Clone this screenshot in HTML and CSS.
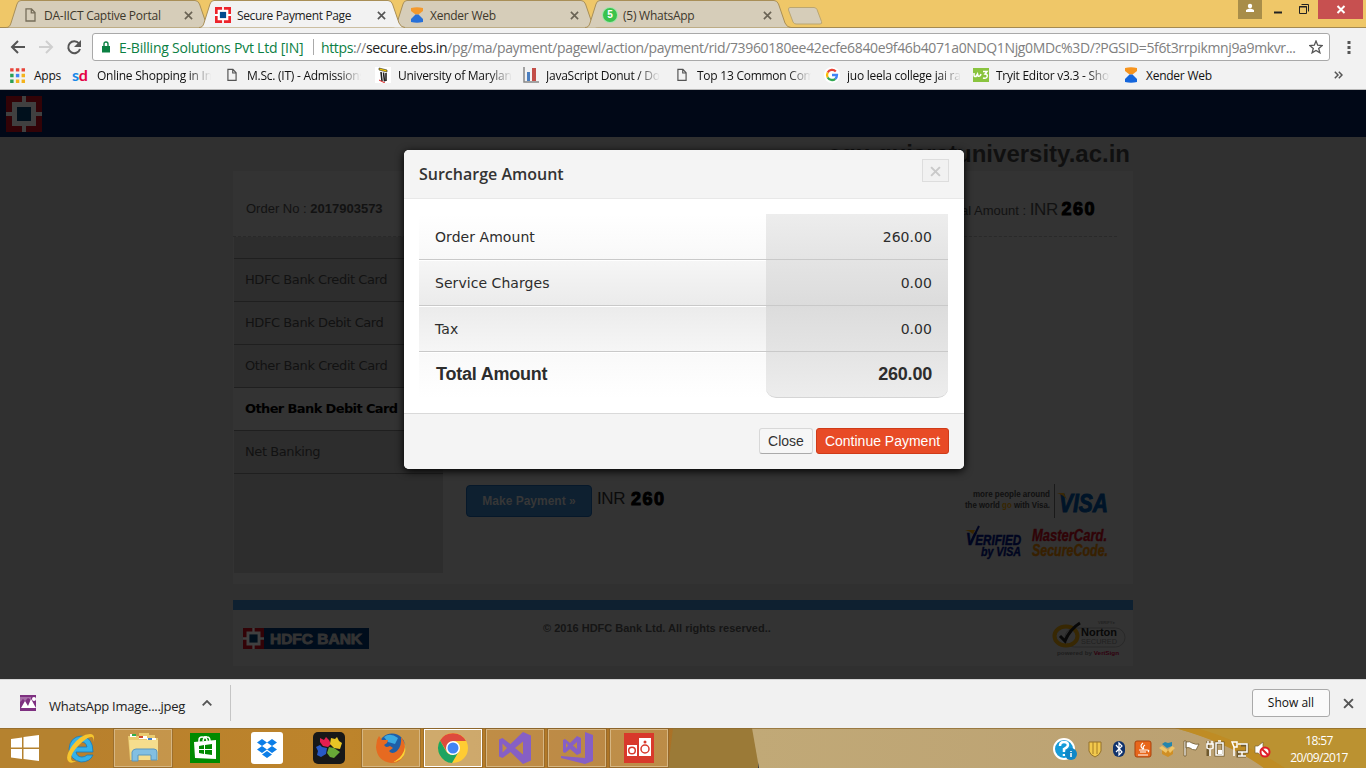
FILE: index.html
```html
<!DOCTYPE html>
<html lang="en">
<head>
<meta charset="utf-8">
<title>Secure Payment Page</title>
<link rel="stylesheet" href="styles.css">
</head>
<body>
<svg class="defs" width="0" height="0">
  <symbol id="hdfc" viewBox="0 0 36 36"><path class="h-red" d="M0 0h36v36H0z"/><path class="h-white" d="M6 6h24v24H6zM16 0h4v36h-4zM0 16h36v4H0z"/><path class="h-blue" d="M11 11h14v14H11z"/></symbol>
  <symbol id="doc" viewBox="0 0 11 14"><path d="M1 .8h5.500L10 4.500V13H1zM6.300 1v3.800H10" fill="none" stroke="currentColor" stroke-width="1.300"/></symbol>
  <symbol id="xender" viewBox="0 0 16 16"><path d="M2 1q6-1.500 12 0v3L9.500 7.500h-3L2 4z" fill="#f7941d"/><path d="M6.500 7.500h3L14 12v3q-6 1.500-12 0v-3z" fill="#1566dc"/></symbol>
  <symbol id="x" viewBox="0 0 10 10"><path d="M1 1l8 8M9 1L1 9" fill="none" stroke="currentColor" stroke-width="1.800"/></symbol>
  <symbol id="tabshape" viewBox="0 0 206 28"><path d="M0 27.500C3 27.500 4 26 5 23L11 4Q12 .5 15 .5H189Q192 .5 193.500 4L200 23Q202 27.500 206 27.500"/></symbol>
  <symbol id="vs" viewBox="0 0 32 32"><path fill-rule="evenodd" d="M24 0l8 3.500v25L24 32 11.500 20 3.500 26 0 24.500v-17L3.500 6l8 6zM24 9.500L16 16l8 6.500zM3.500 11.500v9L8 16z" fill="#865fc5"/></symbol>
</svg>

<header class="browser">
  <div class="tabstrip">
    <div class="tab"><svg class="shape"><use href="#tabshape"/></svg><svg class="fav doc"><use href="#doc"/></svg><span class="tab-title t1">DA-IICT Captive Portal</span><svg class="tab-x"><use href="#x"/></svg></div>
    <div class="tab active"><svg class="shape"><use href="#tabshape"/></svg><svg class="fav bright"><use href="#hdfc"/></svg><span class="tab-title t2">Secure Payment Page</span><svg class="tab-x"><use href="#x"/></svg></div>
    <div class="tab"><svg class="shape"><use href="#tabshape"/></svg><svg class="fav pale"><use href="#xender"/></svg><span class="tab-title">Xender Web</span><svg class="tab-x"><use href="#x"/></svg></div>
    <div class="tab"><svg class="shape"><use href="#tabshape"/></svg><span class="fav wa">5</span><span class="tab-title">(5) WhatsApp</span><svg class="tab-x"><use href="#x"/></svg></div>
    <svg class="newtab" viewBox="0 0 36 18"><path d="M3 .5h24q2 0 3 2l4.500 12q1 2.500-1.500 2.500H9q-2 0-3-2L1.500 3Q1 .5 3 .5z" fill="#d6cdb9" stroke="#bba671"/></svg>
    <div class="win">
      <span class="user"><svg width="24" height="19"><circle cx="12" cy="6" r="2.200" fill="#fff"/><path d="M8 12V10q4-3 8 0v2z" fill="#fff"/></svg></span>
      <svg class="minmax" width="56" height="19"><path d="M12 12.500h8" stroke="#222" stroke-width="2"/><path d="M37.500 6.500h7v7h-7zM37 7h8M39.500 4.500h7v7" fill="none" stroke="#222"/></svg>
      <span class="close"><svg width="45" height="19"><path d="M19.500 6l7 7M26.500 6l-7 7" stroke="#fff" stroke-width="2"/></svg></span>
    </div>
  </div>
  <div class="toolbar">
    <svg class="nav" width="92" height="34"><g fill="none" stroke-width="2"><path d="M25 19H12M18 13l-6 6 6 6" stroke="#555"/><path d="M39 19h13M46 13l6 6-6 6" stroke="#cfcfcf"/><path d="M79 15.500A6 6 0 1 0 80 21" stroke="#555"/></g><path d="M81 12v7h-7z" fill="#555"/></svg>
    <div class="omnibox">
      <svg class="lock" viewBox="0 0 8 12"><path d="M0 5h8v6.500H0z" fill="#0b8043"/><path d="M2 5V3q0-2 2-2t2 2v2" fill="none" stroke="#0b8043" stroke-width="1.400"/></svg>
      <span class="ev">E-Billing Solutions Pvt Ltd [IN]</span><span class="bar"></span>
      <span class="url"><span class="green">https</span>://<b>secure.ebs.in</b>/pg/ma/payment/pagewl/action/payment/rid/73960180ee42ecfe6840e9f46b4071a0NDQ1Njg0MDc%3D/?PGSID=5f6t3rrpikmnj9a9mkvr...</span>
      <svg class="star" viewBox="0 0 14 14"><path d="M7 1l1.700 4.200 4.500.3-3.500 2.900 1.200 4.400L7 10.400l-3.900 2.400 1.200-4.400L.8 5.500l4.500-.3z" fill="none" stroke="#555" stroke-width="1.300"/></svg>
    </div>
    <svg class="dots" width="4" height="14"><path d="M.5 0h3v3h-3zM.5 5h3v3h-3zM.5 10h3v3h-3z" fill="#555"/></svg>
  </div>
  <nav class="bookmarks">
    <div class="bm b0"><svg class="bi" viewBox="0 0 14 14"><g fill="#e8443a"><path d="M1 1h3v3H1zM6 1h3v3H6zM11 1h3v3h-3z"/></g><path d="M1 6h3v3H1zM1 11h3v3H1z" fill="#2b9f55"/><path d="M6 6h3v3H6z" fill="#4285f4"/><path d="M11 6h3v3h-3zM6 11h3v3H6zM11 11h3v3h-3z" fill="#f4b31c"/></svg><span>Apps</span></div>
    <div class="bm b1"><span class="sd">s<i>d</i></span><span class="fade">Online Shopping in India</span></div>
    <div class="bm b2"><svg class="bi doc"><use href="#doc"/></svg><span class="fade">M.Sc. (IT) - Admissions</span></div>
    <div class="bm b3"><svg class="bi" viewBox="0 0 16 16"><path d="M0 0h16v16H0z" fill="#fff"/><path d="M4 1l8 2v2L4 3z" fill="#ffd200" stroke="#222" stroke-width=".6"/><path d="M6 5l1 9M8.500 5.500l1 9M11 6v8" stroke="#222" stroke-width="1.600"/><path d="M4 13l6 3" stroke="#d22"/></svg><span class="fade">University of Maryland</span></div>
    <div class="bm b4"><svg class="bi" viewBox="0 0 16 16"><path d="M1 0v15h15" fill="none" stroke="#888" stroke-width="1.500"/><path d="M4 5h3v9H4z" fill="#4c7fc0"/><path d="M9 1h4v13H9z" fill="#c34e48"/></svg><span class="fade">JavaScript Donut / Doughnut</span></div>
    <div class="bm b5"><svg class="bi doc"><use href="#doc"/></svg><span class="fade">Top 13 Common Computer</span></div>
    <div class="bm b6"><svg class="bi" viewBox="0 0 16 16"><circle cx="8" cy="8" r="8" fill="#fff"/><g fill="none" stroke-width="2.300"><path d="M11.800 4.500A5 5 0 0 0 3.700 5.500" stroke="#ea4335"/><path d="M3.700 5.500a5 5 0 0 0 0 5" stroke="#fbbc05"/><path d="M3.700 10.500a5 5 0 0 0 7.600 1.300" stroke="#34a853"/><path d="M11.300 11.800A5 5 0 0 0 13 8H8" stroke="#4285f4"/></g></svg><span class="fade">juo leela college jai ram</span></div>
    <div class="bm b7"><svg class="bi" viewBox="0 0 16 16"><path d="M0 1h16v14H0z" fill="#8ac43f"/><path d="M1 6v2q0 2 2 1.500L4.500 7 5 9q2 1 3-2M10 4.500h4L12 7q3 0 2 3-1 2-4 1" fill="none" stroke="#fff" stroke-width="1.500"/></svg><span class="fade">Tryit Editor v3.3 - Show</span></div>
    <div class="bm b8"><svg class="bi"><use href="#xender"/></svg><span>Xender Web</span></div>
    <svg class="more" width="9" height="8"><path d="M.8.8L4 4 .8 7.200M4.800.8L8 4 4.800 7.200" fill="none" stroke="#555" stroke-width="1.500"/></svg>
  </nav>
</header>

<main class="page">
  <div class="site-head"><svg class="site-logo"><use href="#hdfc"/></svg></div>
  <div class="site-name">egu.gujaratuniversity.ac.in</div>
  <section class="box">
    <div class="order"><span class="order-no">Order No : <b>2017903573</b></span><span class="order-total">Total Amount : <span class="inr">INR</span> <b>260</b></span></div>
    <div class="cols">
      <ul class="methods"><li>HDFC Bank Credit Card</li><li>HDFC Bank Debit Card</li><li>Other Bank Credit Card</li><li class="on">Other Bank Debit Card</li><li>Net Banking</li></ul>
      <div class="pay">
        <div class="pay-row"><span class="make">Make Payment »</span><span class="inr">INR</span><b>260</b></div>
        <svg class="cards" width="150" height="80">
          <g font-family="Liberation Sans" font-weight="bold">
            <text x="12" y="17" font-size="9" fill="#101010" textLength="77" lengthAdjust="spacingAndGlyphs">more people around</text>
            <text x="4" y="28" font-size="9" fill="#101010" textLength="85" lengthAdjust="spacingAndGlyphs">the world <tspan fill="#382600">go</tspan> with Visa.</text>
            <path d="M93.500 4v34" stroke="#1a1a1a"/>
            <g font-style="italic"><text x="98" y="32" font-size="26" fill="#001428" stroke="#001428" textLength="49" lengthAdjust="spacingAndGlyphs">VISA</text><path d="M96 13h7l3 7q-3-5-10-7z" fill="#3a2806"/>
            <text x="5" y="65" font-size="17" fill="#000520" stroke="#000520" stroke-width=".5" textLength="55" lengthAdjust="spacingAndGlyphs">V<tspan font-size="14">ERIFIED</tspan></text><path d="M4 50l10 0-2 4q-3-3-8-4z" fill="#382600"/><path d="M10 62l8-16" stroke="#000520" stroke-width="2"/>
            <text x="20" y="76" font-size="12" fill="#000520" stroke="#000520" stroke-width=".4" textLength="40" lengthAdjust="spacingAndGlyphs">by VISA</text>
            <text x="71" y="61" font-size="17" fill="#300307" stroke="#300307" stroke-width=".4" textLength="75" lengthAdjust="spacingAndGlyphs">MasterCard.</text>
            <text x="71" y="76" font-size="16" fill="#382000" stroke="#382000" stroke-width=".4" textLength="76" lengthAdjust="spacingAndGlyphs">SecureCode.</text></g>
          </g>
        </svg>
      </div>
    </div>
  </section>
  <footer class="foot">
    <div class="bank"><svg><use href="#hdfc"/></svg><svg width="105" height="21"><text x="6" y="15.500" font-family="Liberation Sans" font-weight="bold" font-size="14" fill="#333" stroke="#333" stroke-width=".9" textLength="92" lengthAdjust="spacingAndGlyphs">HDFC BANK</text></svg></div>
    <p>© 2016 HDFC Bank Ltd. All rights reserved..</p>
    <svg class="norton" width="76" height="40"><rect x="14" y="9" width="60" height="19" rx="9.500" fill="none" stroke="#292929"/><ellipse cx="15" cy="17" rx="11.500" ry="9.500" fill="none" stroke="#382803" stroke-width="4"/><path d="M9 17l5 5Q19 10 29 4" fill="none" stroke="#080808" stroke-width="3"/><g font-family="Liberation Sans" font-weight="bold"><text x="30" y="17" font-size="11" fill="#080808" textLength="36" lengthAdjust="spacingAndGlyphs">Norton</text><text x="30" y="25" font-size="7" fill="#202020" font-weight="normal" textLength="36" lengthAdjust="spacingAndGlyphs">SECURED</text><text x="47" y="5" font-size="4" fill="#222">VERIFY ▸</text><text x="6" y="36" font-size="5.500" fill="#1d1d1d" textLength="62" lengthAdjust="spacingAndGlyphs">powered by <tspan fill="#30000d">VeriSign</tspan></text></g></svg>
  </footer>

  <div class="modal">
    <div class="m-head"><h3>Surcharge Amount</h3><span class="m-x"><svg width="11" height="11"><use href="#x"/></svg></span></div>
    <div class="m-body">
      <div class="row r1"><span>Order Amount</span><span class="amt">260.00</span></div>
      <div class="row r2"><span>Service Charges</span><span class="amt">0.00</span></div>
      <div class="row r3"><span>Tax</span><span class="amt">0.00</span></div>
      <div class="row r4"><span>Total Amount</span><span class="amt">260.00</span></div>
    </div>
    <div class="m-foot"><span class="btn">Close</span><span class="btn go">Continue Payment</span></div>
  </div>
</main>

<div class="shelf">
  <svg class="file" viewBox="0 0 16 16"><path d="M0 0h16v16H0z" fill="#7e3080"/><path d="M0 2h11v3L8 3 5 6 3 4 0 7z" fill="#fff" opacity=".3"/><path d="M1 13l4-7 3 5 3-7 5 9z" fill="#fff"/><circle cx="14" cy="4" r="2" fill="#fff"/></svg>
  <span class="fname">WhatsApp Image....jpeg</span>
  <svg class="up" width="10" height="6"><path d="M.7 5.300L5 1l4.300 4.300" fill="none" stroke="#555" stroke-width="1.800"/></svg>
  <span class="sep"></span>
  <span class="showall">Show all</span>
  <svg class="shelf-x"><use href="#x"/></svg>
</div>

<div class="taskbar">
  <svg class="wall" width="1366" height="40"><defs><linearGradient id="g1"><stop offset="0" stop-color="#b77f2d"/><stop offset=".5" stop-color="#bd842b"/><stop offset="1" stop-color="#a97026"/></linearGradient><linearGradient id="g2"><stop offset="0" stop-color="#c1a977"/><stop offset="1" stop-color="#b99e70"/></linearGradient></defs><path d="M0 0h700v40H0z" fill="url(#g1)"/><path d="M0 0h74q-3 25-12 40H0z" fill="#b5822f"/><path d="M673 0h85v40h-90z" fill="#9b7a37"/><path d="M752 0h614v40H759z" fill="url(#g2)"/><path d="M1175 0h191v40h-102q-30-24-89-40z" fill="#bb9231"/><path d="M1175 0h22q48 14 88 40h-21q-35-25-89-40z" fill="#bf8c24"/><path d="M0 .5h1366" stroke="#8c682e" opacity=".7"/></svg>
  <div class="task start"><svg viewBox="0 0 28 26"><path d="M0 4l11-1.500V12.500H0zM12.500 2L28 0v12.500H12.500zM0 14h11v10L0 22.500zM12.500 14H28v12l-15.500-2z" fill="#fff"/></svg></div>
  <div class="task ie"><svg viewBox="0 0 32 32"><path fill-rule="evenodd" d="M28 20H11q1 5 6 5 3 0 5-2h6q-3 7-12 7Q5 28 4 17 5 5 16 4q12 1 12 16zM11 15h11q-1-5-5.500-5T11 15z" fill="#35b1e8" stroke="#1979b8" stroke-width=".8"/><path d="M28 10Q31 2 25 2 16 2 7 14-1 26 4 30q3 2 9-2-6 3-7-1 0-6 8-14Q23 4 27 5q2 1 1 5z" fill="#f6c52e"/></svg></div>
  <div class="task framed"><svg viewBox="0 0 32 32"><path d="M1 4h11v-3h10v2h6v3h3v22H3z" fill="#eacb70"/><path d="M3 2h6v3H3z" fill="#fff"/><path d="M5 2h4v2H5z" fill="#2eae4b"/><path d="M12 4h8v3h-8z" fill="#fff"/><path d="M12 4h4v2h-4z" fill="#d34b2a"/><path d="M20 6h9v3h-9z" fill="#fff"/><path d="M21 6h4v2h-4z" fill="#4080d0"/><path d="M2 8h29v20H4z" fill="#f5dd8d"/><path d="M5 29V20q1-3 4-3h18q3 0 3 3v8h-6v-5H11v6z" fill="#82bfe2" stroke="#5b97bd"/></svg></div>
  <div class="task store"><svg viewBox="0 0 32 32"><path d="M1 1h30v30H1z" fill="#008a00"/><path d="M5 10l22-2v19L6 26z" fill="#fff"/><path d="M10 10V8q0-3 3-3 5 0 5 4M14 9q1-5 4-4 3 0 3 4" fill="none" stroke="#fff" stroke-width="1.500"/><path d="M10 14l5-1v4h-5zM16 13l7-1v5h-7zM10 18h5v4l-5-1zM16 18h7v5l-7-1z" fill="#008a00"/></svg></div>
  <div class="task drop"><svg viewBox="0 0 32 32"><rect width="32" height="32" rx="3" fill="#fff"/><path d="M11 7l5 3.500-5 3.500-5-3.500zM21 7l5 3.500-5 3.500-5-3.500zM11 14l5 3.500-5 3.500-5-3.500zM21 14l5 3.500-5 3.500-5-3.500zM16 19l5 3.500-5 3.500-5-3.500z" fill="#0c7ee8"/></svg></div>
  <div class="task puzzle"><svg viewBox="0 0 32 32"><rect width="32" height="32" rx="5" fill="#181818"/><path d="M7 6l4 2 2-3 3 3 2 4-3 3-5-1-3-4z" fill="#e41e50"/><path d="M18 6l4 1 2-2 2 4 3 2-2 6-6-1-4-4z" fill="#e8c425"/><path d="M3 15l4-2 2 2 5 1-1 6-5 3-4-2 1-4z" fill="#2859c5"/><path d="M16 15l5 1 6 4-3 3-3 3-4-1-3-4z" fill="#69a937"/></svg></div>
  <div class="task framed ff"><svg viewBox="0 0 32 32"><circle cx="17" cy="15" r="13.500" fill="#1f5fa8"/><path d="M9 5q6-5 14 1l-3 6-7-2z" fill="#3aa9e0"/><path d="M2 8l2-4 3 4 6 0-1 3-3 2 2 2q2 0 4-1l3 2-4 3q3 4 8 0 5-5 4-14 5 6 4 12-1 14-14 14Q2 29 1 15z" fill="#e66a20"/><path d="M26 4q6 7 3 15-4 9-12 11 12-1 13.500-12Q31 9 26 4z" fill="#fbd336"/></svg></div>
  <div class="task framed cur"><svg viewBox="0 0 32 32"><circle cx="16" cy="16" r="15" fill="#fc3"/><path d="M3 8.500A15 15 0 0 1 29 9H16l-6.500 10z" fill="#de4b3d"/><path d="M3 8.500A15 15 0 0 0 15 31l7-12-6 4q-5 0-7-4z" fill="#1da462"/><circle cx="16" cy="16" r="7" fill="#fff"/><circle cx="16" cy="16" r="5.500" fill="#4285f4"/></svg></div>
  <div class="task framed vs"><svg><use href="#vs"/></svg></div>
  <div class="task framed vs"><svg viewBox="0 0 32 32"><path d="M24 0l8 3v26l-8 3L0 26v-2l24 2z" fill="#865fc5"/><path fill-rule="evenodd" d="M16 4l4 2v15l-4 2-7-6-5 4-2-1V8l2-1 5 4zM16 10l-4 3.500 4 3.500zM5 11v5l2-2.500z" fill="#865fc5"/></svg></div>
  <div class="task framed red"><svg viewBox="0 0 32 32"><path d="M1 1h30v30H1z" fill="#d8392b"/><path d="M4 13h10v11H4zM16 6h12v18H16z" fill="#fff"/><g fill="none" stroke="#d8392b" stroke-width="1.500"><circle cx="9" cy="18.500" r="3.300"/><circle cx="22" cy="17" r="4"/></g><circle cx="22" cy="10" r="1.500" fill="#d8392b"/></svg></div>
  <svg class="tray" width="232" height="40">
    <circle cx="17" cy="21" r="10" fill="#159bd8" stroke="#fff" stroke-width="2"/><path d="M13 18q0-4 4-4t4 3q0 2-4 4v3M17 26v2" fill="none" stroke="#fff" stroke-width="2.500"/><circle cx="24" cy="26" r="6" fill="#0f87c7"/><path d="M24 23v1M24 25v4" stroke="#fff" stroke-width="1.500"/>
    <path d="M42 14h12v9q-1 4-6 6-5-2-6-6z" fill="#f2c94d" stroke="#93702c"/><path d="M46 14v12M50 14v12" stroke="#a67c25"/>
    <rect x="66" y="13" width="12" height="16" rx="6" fill="#0f326c"/><path d="M69 17l6 7-3 3V15l3 3-6 6" fill="none" stroke="#fff" stroke-width="1.200"/>
    <rect x="88" y="13" width="16" height="16" rx="2" fill="#e8661b" stroke="#a9430e"/><path d="M96 15q-4 3 0 6M98 17q-3 2-1 4M92 22h8q3 0 1 2M93 24h6M91 27h10" fill="none" stroke="#fff" stroke-width="1.200"/>
    <path d="M115 20l6 2 5-2v6l-5 3-6-3z" fill="#d08f25"/><path d="M112 20l3-2 6 4-2 3zM128 20l-3-2-4 4 2 3z" fill="#efc466"/><path d="M115 16l3-2 3 1 4-1v4l-5 2z" fill="#2385ad"/>
    <g transform="translate(1)"><path d="M136 13h2v15h-2zM138 14q4-1 6 1 4 2 7 1l-3 6q-4 0-6-2-2-1-4 0z" fill="#fff" stroke="#6e592e" stroke-width=".8"/></g>
    <g transform="translate(6)"><path d="M163 15h7v12h-7zM155 13v15M188 17h6v7h-9v4h8" fill="none" stroke="#6e592e" stroke-width="3"/>
    <g fill="none" stroke="#fff" stroke-width="1.500"><path d="M163 15h7v12h-7zM165 13h3M154 16h6v4q-3 2-6 0zM155 13v3M159 13v3M157 21v7"/><path d="M185 16h9v8h-9M189 24v4M185 28h8M179 14h5v5h-3zM181 19v9"/></g><path d="M165 22h4v4h-4z" fill="#fff"/>
    <path d="M202 18h3l5-4v15l-5-4h-3z" fill="#fff" stroke="#7a6435" stroke-width=".7"/><circle cx="212" cy="24" r="4.500" fill="#fff" stroke="#df1f26" stroke-width="2"/><path d="M209 21l6 6" stroke="#df1f26" stroke-width="2"/></g>
  </svg>
  <div class="clock"><span>18:57</span><span>20/09/2017</span></div>
</div>
</body>
</html>
```
FILE: styles.css
```css
*{box-sizing:border-box}
body{margin:0;width:1366px;height:768px;overflow:hidden;display:flex;flex-direction:column;font-family:"Liberation Sans",Arial,sans-serif;background:#303030}
.defs{position:absolute}
svg{display:block;flex:none}
.browser,.shelf,.taskbar{font-family:"Open Sans","Noto Sans",sans-serif;font-size:12px;letter-spacing:-.25px;white-space:nowrap;flex:none}
.browser{height:90px;background:#f2f2f2;border-bottom:1px solid #b9b9b9}
.h-red{fill:var(--red,#320307)}.h-white{fill:var(--white,#404040)}.h-blue{fill:var(--blue,#00101c)}
.bright{--red:#ed232a;--white:#fff;--blue:#004c8f}

.tabstrip{height:28px;background:#efc768;display:flex;padding-left:6px;box-shadow:inset 0 -1px #a58a50}
.tab{position:relative;width:206px;height:28px;margin-right:-13px;display:flex;align-items:center;padding:2px 19px 0 18px;flex:none;color:#3d382c}
.tab .shape{position:absolute;left:0;top:0;width:206px;height:28px;fill:#d6cdb9;stroke:#a98f57}
.tab .fav{position:relative;width:16px;height:16px;margin-right:5px;margin-left:-1px}
.tab .fav.doc{width:11px;height:14px;margin:0 8px 0 1px;color:#766d5a}
.tab.active{z-index:2;color:#222}
.tab.active .shape{fill:#f2f2f2}
.tab.active .fav{margin-right:6px;margin-left:-2px}
.tab-title{position:relative;flex:1}
.active .tab-title{letter-spacing:-.35px}
.tab-x{position:relative;width:9px;height:9px;color:#6a6354}
.active .tab-x{color:#555}
.pale{opacity:.9}
.wa{border-radius:50%;background:#3ac34c;color:#fff;font:bold 10px/14px "Liberation Sans",sans-serif;text-align:center;border:1px solid #fff8}
.newtab{width:36px;height:18px;margin:7px 0 0 9px}
.win{margin-left:auto;display:flex;height:19px;padding-right:3px}
.user{background:#a88d49}.close{background:#c75050}

.toolbar{height:34px;display:flex;align-items:center}
.omnibox{width:1238px;height:28px;margin-top:4px;background:#fff;border:1px solid #a9a9a9;border-radius:3px;display:flex;align-items:center;font-size:14px}
.lock{width:8px;height:12px;margin:0 9px 0 9px}
.ev{color:#0b8043;width:185px;letter-spacing:-.22px}
.bar{width:1px;height:16px;background:#aaa;margin:0 7px 0 9px}
.url{color:#808080;width:978px;letter-spacing:-.36px}
.url b{font-weight:400;color:#222}.green{color:#0b8043}
.star{width:14px;height:14px;margin-left:10px}
.dots{margin:5px 0 0 17px}

.bookmarks{height:26px;display:grid;grid-template-columns:63px 154px 149px 148px 153px 148px 150px 150px 130px 1fr;padding-left:9px;align-items:center;color:#111}
.bm{display:flex;align-items:center;min-width:0}
.bi{width:16px;height:16px;margin-right:7px}
.b0 .bi{margin-right:9px}
.b7 .bi,.b8 .bi{margin-left:-1px}
.bi.doc{width:10px;height:14px;margin:0 10px 0 1px;color:#555}
.fade{width:114px;overflow:hidden;-webkit-mask:linear-gradient(90deg,#000 80%,transparent);mask:linear-gradient(90deg,#000 80%,transparent)}
.sd{width:17px;margin-right:8px;font:bold 16px/16px "Lato",sans-serif;color:#1788e8}
.sd i{font-style:normal;color:#e40046}
.more{margin-left:80px}

.page{position:relative;height:589px;flex:none;overflow:hidden;background:#303030;color:#121212}
.site-head{height:47px;background:#010817;padding:6px}
.site-logo{width:36px;height:36px}
.site-name{height:34px;padding-right:236px;text-align:right;font:bold 24px/34px "Liberation Sans",Arial,sans-serif;color:#101010}
.box{width:900px;height:413px;margin-left:233px;background:#333}
.order{height:66px;width:884px;border-bottom:1px dashed #292929;display:flex;justify-content:space-between;padding:26px 21px 0 13px;font-size:13px;line-height:24px}
.order-total b{font:900 18px/24px "Liberation Sans",sans-serif;color:#000;-webkit-text-stroke:1px #000;letter-spacing:1.500px}
.inr{font-size:17px;letter-spacing:-.4px}
.cols{display:flex}
.methods{margin:0 0 0 1px;padding:21px 0 0;width:209px;height:336px;background:#2d2d2d;list-style:none;font:13px/42px "DejaVu Sans",sans-serif;color:#121212}
.methods li{height:43px;padding-left:11px;border-top:1px solid #1f1f1f;white-space:nowrap;letter-spacing:-.42px}
.methods li.on{background:#333;color:#000;font-weight:700;letter-spacing:-.62px}
.methods li:last-child{border-bottom:1px solid #1f1f1f;height:44px}
.pay{flex:1;display:flex;justify-content:space-between;padding:248px 22px 0 23px;align-items:flex-start}
.pay-row{display:flex;align-items:center;color:#0b0b0b}
.make{width:126px;height:32px;background:#0e2030;border:1px solid #06182a;border-radius:4px;color:#373737;font:bold 12px/30px "Liberation Sans";text-align:center}
.pay-row .inr{margin:-4px 6px 0 5px}
.pay-row b{font-size:18px;margin-top:-4px;color:#000;-webkit-text-stroke:1px #000;letter-spacing:1.500px}
.cards{margin-top:-5px}
.foot{width:900px;height:66px;margin:16px 0 0 233px;border-top:10px solid #0e2030;background:#333;display:flex}
.bank{display:flex;height:21px;background:#000d1c;margin:18px 0 0 10px;width:126px}
.bank svg:first-child{width:21px;height:21px}
.foot p{margin:11px 0 0 174px;width:508px;font:bold 11px/14px "Liberation Sans";color:#151515;white-space:nowrap;letter-spacing:0}
.norton{margin-top:9px}

.modal{position:absolute;left:404px;top:60px;width:560px;height:319px;background:#fff;border-radius:5px;overflow:hidden;box-shadow:0 2px 8px #000;color:#2d2d2d}
.m-head{height:49px;background:#f4f4f4;border-bottom:1px solid #e8e8e8;display:flex;justify-content:space-between;padding:9px 15px 0}
.m-head h3{margin:0;font:600 16px/30px "Open Sans",sans-serif;color:#333}
.m-x{width:27px;height:23px;border:1px solid #ddd;background:#f1f1f1;display:grid;place-items:center;color:#c9c9c9;padding-top:2px}
.m-body{height:214px;padding:15px 16px 0 15px}
.row{height:46px;display:flex;justify-content:space-between;border-bottom:1px solid #c9c9c9;padding-left:16px;font:14px/47px "DejaVu Sans",sans-serif;letter-spacing:.05px;background:linear-gradient(#fff,#f8f8f8)}
.amt{width:182px;height:45px;text-align:right;padding-right:16px;background:linear-gradient(#ededed,#e4e4e4)}
.r2{background:linear-gradient(#f6f6f6,#ebebeb)}.r2 .amt{background:linear-gradient(#e4e4e4,#dcdcdc)}
.r3{background:linear-gradient(#ebebeb,#f6f6f6)}.r3 .amt{background:linear-gradient(#dcdcdc,#e4e4e4)}
.r4{border:0;background:linear-gradient(#f9f9f9,#fff);font:bold 18px/44px "Liberation Sans";letter-spacing:-.22px;padding-left:17px}
.r4 .amt{height:46px;background:linear-gradient(#e4e4e4,#ededed);border-bottom:1px solid #d5d5d5;border-radius:0 0 10px 10px}
.row+.row{box-shadow:inset 0 1px #fff}
.m-foot{height:56px;background:#f4f4f4;border-top:1px solid #d9d9d9;display:flex;justify-content:flex-end;gap:3px;padding:14px 15px 0}
.btn{width:54px;height:26px;border:1px solid #d8d8d8;border-bottom-color:#aaa;border-radius:3px;background:#f6f6f6;font-size:14px;line-height:24px;text-align:center;color:#333}
.btn.go{width:133px;background:#e84b26;border-color:#cf3b18;color:#fff}

.shelf{height:49px;background:#f1f1f1;border-top:1px solid #d5d5d5;display:flex;align-items:center;font-size:13px;letter-spacing:0;color:#222;padding-bottom:2px}
.file{width:16px;height:16px;margin:0 13px 0 20px}
.fname{width:137px;margin-top:5px;letter-spacing:-.27px}
.up{margin-left:16px}
.sep{width:1px;height:36px;background:#c5c5c5;margin-left:18px}
.showall{margin-left:auto;width:78px;height:28px;border:1px solid #aaa;border-radius:3px;background:#fafafa;text-align:center;font-size:12px;line-height:26px;color:#111}
.shelf-x{width:11px;height:11px;margin:0 12px 0 13px;color:#555}

.taskbar{position:relative;height:40px;display:flex;color:#fff}
.wall{position:absolute;left:0;top:0}
.task{position:relative;width:60px;height:40px;display:grid;place-items:center;flex:none}
.task svg{width:32px;height:32px}
.start{width:50px}.start svg{width:28px;height:26px}
.ie{width:62px;margin-right:2px}
.framed{width:58px;height:38px;margin-top:1px;margin-right:4px;background:#d8b47a66;border:1px solid #d6b682;box-shadow:0 0 0 1px #85602d88}
.cur{background:#ddc69a99;border-color:#fff}
.vs{background:#d0a87466}
.store{margin-left:-2px;width:62px}.drop{width:62px}.puzzle{width:62px;margin-right:1px}
.ff{margin-left:1px}
.tray{position:relative;margin:0 0 0 375px}
.clock{position:relative;width:84px;margin-left:-2px;display:flex;flex-direction:column;align-items:center;line-height:17px;padding-top:4px;letter-spacing:-.6px}
```
